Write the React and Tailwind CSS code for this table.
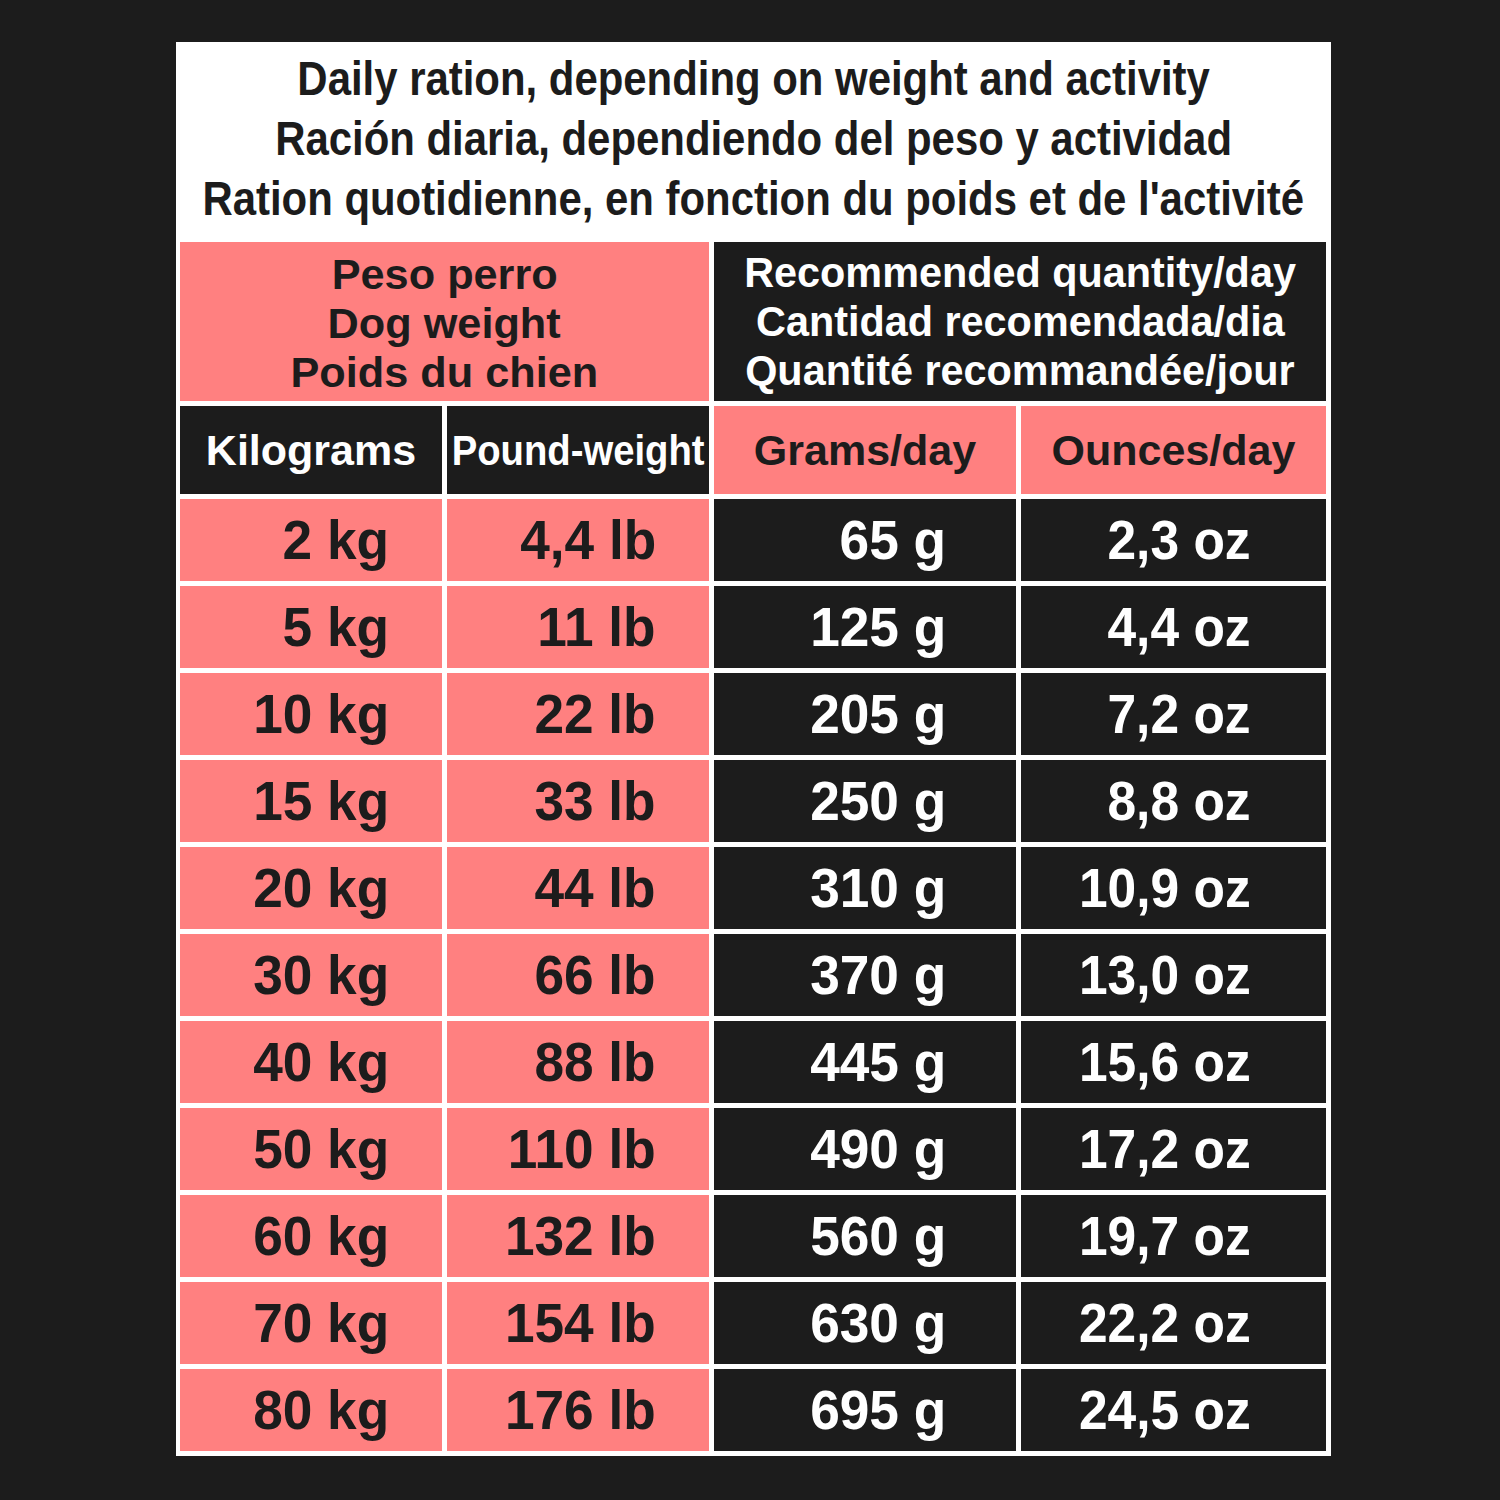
const rows = [
  ["2 kg", "4,4 lb", "65 g", "2,3 oz"],
  ["5 kg", "11 lb", "125 g", "4,4 oz"],
  ["10 kg", "22 lb", "205 g", "7,2 oz"],
  ["15 kg", "33 lb", "250 g", "8,8 oz"],
  ["20 kg", "44 lb", "310 g", "10,9 oz"],
  ["30 kg", "66 lb", "370 g", "13,0 oz"],
  ["40 kg", "88 lb", "445 g", "15,6 oz"],
  ["50 kg", "110 lb", "490 g", "17,2 oz"],
  ["60 kg", "132 lb", "560 g", "19,7 oz"],
  ["70 kg", "154 lb", "630 g", "22,2 oz"],
  ["80 kg", "176 lb", "695 g", "24,5 oz"],
];

const pink = "bg-[#ff8080] text-[#1c1c1c]";
const dark = "bg-[#1c1c1c] text-white";
const num = "flex items-center justify-end text-[56px] leading-none font-bold";

export default function App() {
  return (
    <div className="w-[1500px] h-[1500px] bg-[#1c1c1c] pt-[42px] pl-[176px] font-['Liberation_Sans',Arial,sans-serif]">
      <div className="w-[1155px] bg-white p-[4px] pb-[5px]">
        <div className="h-[196px] pb-[12px] flex flex-col items-center justify-center text-[#1c1c1c] text-[49px] leading-[60px] font-bold">
          <span className="inline-block scale-x-[0.855] whitespace-nowrap">Daily ration, depending on weight and activity</span>
          <span className="inline-block scale-x-[0.855] whitespace-nowrap">Ración diaria, dependiendo del peso y actividad</span>
          <span className="inline-block scale-x-[0.855] whitespace-nowrap">Ration quotidienne, en fonction du poids et de l'activité</span>
        </div>
        <div className="grid grid-cols-[262px_262px_302px_305px] gap-[5px]">
          <div className={`${pink} col-span-2 h-[159px] pt-[4px] flex flex-col items-center justify-center text-[42px] leading-[49px] font-bold`}>
            <span className="inline-block scale-x-[1.03]">Peso perro</span>
            <span className="inline-block scale-x-[1.03]">Dog weight</span>
            <span className="inline-block scale-x-[1.03]">Poids du chien</span>
          </div>
          <div className={`${dark} col-span-2 flex flex-col items-center justify-center text-[42px] leading-[49px] font-bold`}>
            <span className="inline-block scale-x-[0.985] whitespace-nowrap">Recommended quantity/day</span>
            <span className="inline-block scale-x-[0.985] whitespace-nowrap">Cantidad recomendada/dia</span>
            <span className="inline-block scale-x-[0.985] whitespace-nowrap">Quantité recommandée/jour</span>
          </div>
          <div className={`${dark} h-[88px] flex items-center justify-center text-[43px] leading-none font-bold`}>
            <span className="inline-block">Kilograms</span>
          </div>
          <div className={`${dark} flex items-center justify-center text-[43px] leading-none font-bold`}>
            <span className="inline-block scale-x-[0.89] whitespace-nowrap">Pound-weight</span>
          </div>
          <div className={`${pink} flex items-center justify-center text-[43px] leading-none font-bold`}>
            <span className="inline-block">Grams/day</span>
          </div>
          <div className={`${pink} flex items-center justify-center text-[43px] leading-none font-bold`}>
            <span className="inline-block">Ounces/day</span>
          </div>
          {rows.map((r) => (
            <div key={r[0]} className="contents">
              <div className={`${pink} ${num} h-[82px] pr-[53px]`}>
                <span className="inline-block origin-right scale-x-[0.95]">{r[0]}</span>
              </div>
              <div className={`${pink} ${num} pr-[53px]`}>
                <span className="inline-block origin-right scale-x-[0.95]">{r[1]}</span>
              </div>
              <div className={`${dark} ${num} pr-[70px]`}>
                <span className="inline-block origin-right scale-x-[0.95]">{r[2]}</span>
              </div>
              <div className={`${dark} ${num} pr-[75px]`}>
                <span className="inline-block origin-right scale-x-[0.92]">{r[3]}</span>
              </div>
            </div>
          ))}
        </div>
      </div>
    </div>
  );
}
